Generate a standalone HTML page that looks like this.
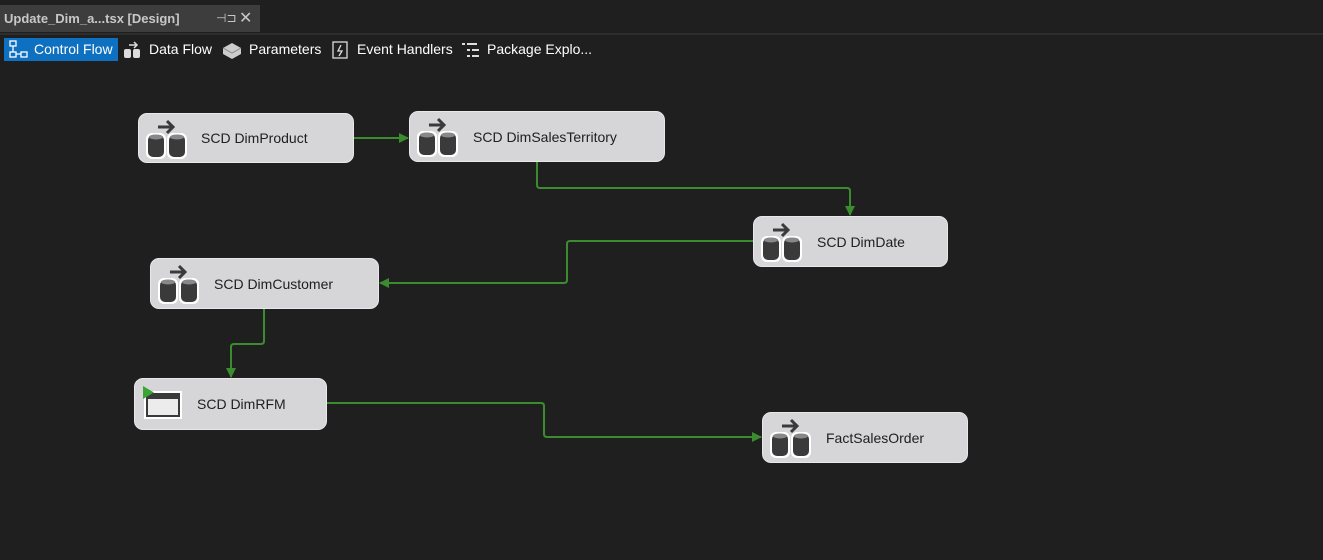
<!DOCTYPE html>
<html><head><style>
body{margin:0;width:1323px;height:560px;background:#1f1f1f;overflow:hidden;font-family:"Liberation Sans",sans-serif;position:relative}
.tabbar{position:absolute;left:0;top:0;width:1323px;height:33px;border-bottom:2px solid #2d2d2d}
.tab{position:absolute;left:0;top:5px;width:260px;height:27px;background:#3d3d3d;color:#c8c8c8;font-weight:bold;font-size:13px;line-height:27px;padding-left:4px;box-sizing:border-box;white-space:nowrap}
.tb{position:absolute;top:38px;height:23px;color:#fff;font-size:14px;line-height:23px;white-space:nowrap}
.box{position:absolute;background:#d6d6d9;border-radius:9px;box-sizing:border-box;border:1px solid #e8e8ea;color:#1e1e1e;font-size:14px;white-space:nowrap}
.box span{position:absolute;top:50%;transform:translateY(-50%)}
.box svg{position:absolute;left:6px;top:5px}
</style></head><body>
<div class="tabbar"><div class="tab">Update_Dim_a...tsx [Design]<span style="position:absolute;left:216px;font-weight:normal;font-size:12px">⊣⊐</span><span style="position:absolute;left:239px;font-weight:normal;font-size:16px">✕</span></div></div>
<div class="tb" style="left:4px;width:114px;background:#0e70c0"><svg width="22" height="20" style="position:absolute;left:4px;top:2px" fill="none" stroke="#fff" stroke-width="1.3"><rect x="2" y="1" width="6" height="5"/><rect x="2" y="12" width="6" height="5"/><rect x="13" y="12" width="6" height="5"/><path d="M5 6v6M8 14h5"/></svg><span style="position:absolute;left:30px">Control Flow</span></div>
<div class="tb" style="left:123px"><svg width="20" height="20" style="position:absolute;left:0;top:2px" fill="#ddd"><rect x="1" y="9" width="7" height="9" rx="2"/><rect x="10" y="9" width="7" height="9" rx="2"/><path d="M6 5h8M11 2l3 3-3 3" stroke="#ddd" stroke-width="1.5" fill="none"/></svg><span style="position:absolute;left:26px">Data Flow</span></div>
<div class="tb" style="left:222px"><svg width="20" height="20" style="position:absolute;left:0;top:2px"><path d="M1 8l9-5 9 5v6l-9 5-9-5z" fill="#ccc"/><path d="M1 8l9 5 9-5" stroke="#888" fill="none"/></svg><span style="position:absolute;left:27px">Parameters</span></div>
<div class="tb" style="left:331px"><svg width="18" height="20" style="position:absolute;left:0;top:2px" fill="none" stroke="#ddd" stroke-width="1.3"><rect x="2" y="2" width="14" height="16"/><path d="M10 5l-3 6h4l-3 5"/></svg><span style="position:absolute;left:26px">Event Handlers</span></div>
<div class="tb" style="left:461px"><svg width="20" height="20" style="position:absolute;left:0;top:2px" fill="#ddd"><rect x="1" y="3" width="3" height="2"/><rect x="6" y="3" width="10" height="2"/><rect x="6" y="9" width="3" height="2"/><rect x="11" y="9" width="7" height="2"/><rect x="6" y="15" width="3" height="2"/><rect x="11" y="15" width="7" height="2"/></svg><span style="position:absolute;left:26px">Package Explo...</span></div>

<svg width="1323" height="560" style="position:absolute;left:0;top:0" fill="none" stroke="#3b8c2f" stroke-width="2">
<defs><marker id="a" markerWidth="10" markerHeight="10" refX="9" refY="5" orient="auto" markerUnits="userSpaceOnUse"><path d="M0 0L10 5L0 10z" fill="#3b8c2f" stroke="none"/></marker></defs>
<path d="M354 138H408" marker-end="url(#a)"/>
<path d="M537 162V185q0 3 3 3H847q3 0 3 3V215" marker-end="url(#a)"/>
<path d="M753 241H570q-3 0-3 3V280q0 3-3 3H380" marker-end="url(#a)"/>
<path d="M264 309V341q0 3-3 3H234q-3 0-3 3V377" marker-end="url(#a)"/>
<path d="M327 403H541q3 0 3 3V434q0 3 3 3H761" marker-end="url(#a)"/>
</svg>

<svg width="0" height="0" style="position:absolute"><defs><g id="db"><rect x="1" y="14" width="20" height="26" rx="6" fill="#fff"/><rect x="3" y="16" width="16" height="22" rx="5" fill="#3a3a3a"/><ellipse cx="11" cy="18" rx="7" ry="2.5" fill="#888"/><rect x="22" y="14" width="20" height="26" rx="6" fill="#fff"/><rect x="24" y="16" width="16" height="22" rx="5" fill="#3a3a3a"/><ellipse cx="32" cy="18" rx="7" ry="2.5" fill="#888"/><path d="M13 8h14M22 2l6 6-6 6" stroke="#3a3a3a" stroke-width="3" fill="none"/></g></defs></svg>

<div class="box" style="left:138px;top:113px;width:216px;height:50px"><svg width="44" height="42"><use href="#db"/></svg><span style="left:62px">SCD DimProduct</span></div>
<div class="box" style="left:409px;top:111px;width:256px;height:51px"><svg width="44" height="42"><use href="#db"/></svg><span style="left:63px">SCD DimSalesTerritory</span></div>
<div class="box" style="left:753px;top:216px;width:195px;height:51px"><svg width="44" height="42"><use href="#db"/></svg><span style="left:63px">SCD DimDate</span></div>
<div class="box" style="left:150px;top:258px;width:229px;height:51px"><svg width="44" height="42"><use href="#db"/></svg><span style="left:63px">SCD DimCustomer</span></div>
<div class="box" style="left:134px;top:378px;width:193px;height:52px"><svg width="44" height="40" style="left:6px;top:6px"><rect x="3" y="6" width="38" height="28" fill="#fff"/><rect x="5" y="8" width="34" height="24" fill="#3a3a3a"/><rect x="7" y="14" width="30" height="16" fill="#ececec"/><path d="M2 1l11 6.5-11 6.5z" fill="#3aa535"/></svg><span style="left:62px">SCD DimRFM</span></div>
<div class="box" style="left:762px;top:412px;width:206px;height:51px"><svg width="44" height="42"><use href="#db"/></svg><span style="left:63px">FactSalesOrder</span></div>
</body></html>
